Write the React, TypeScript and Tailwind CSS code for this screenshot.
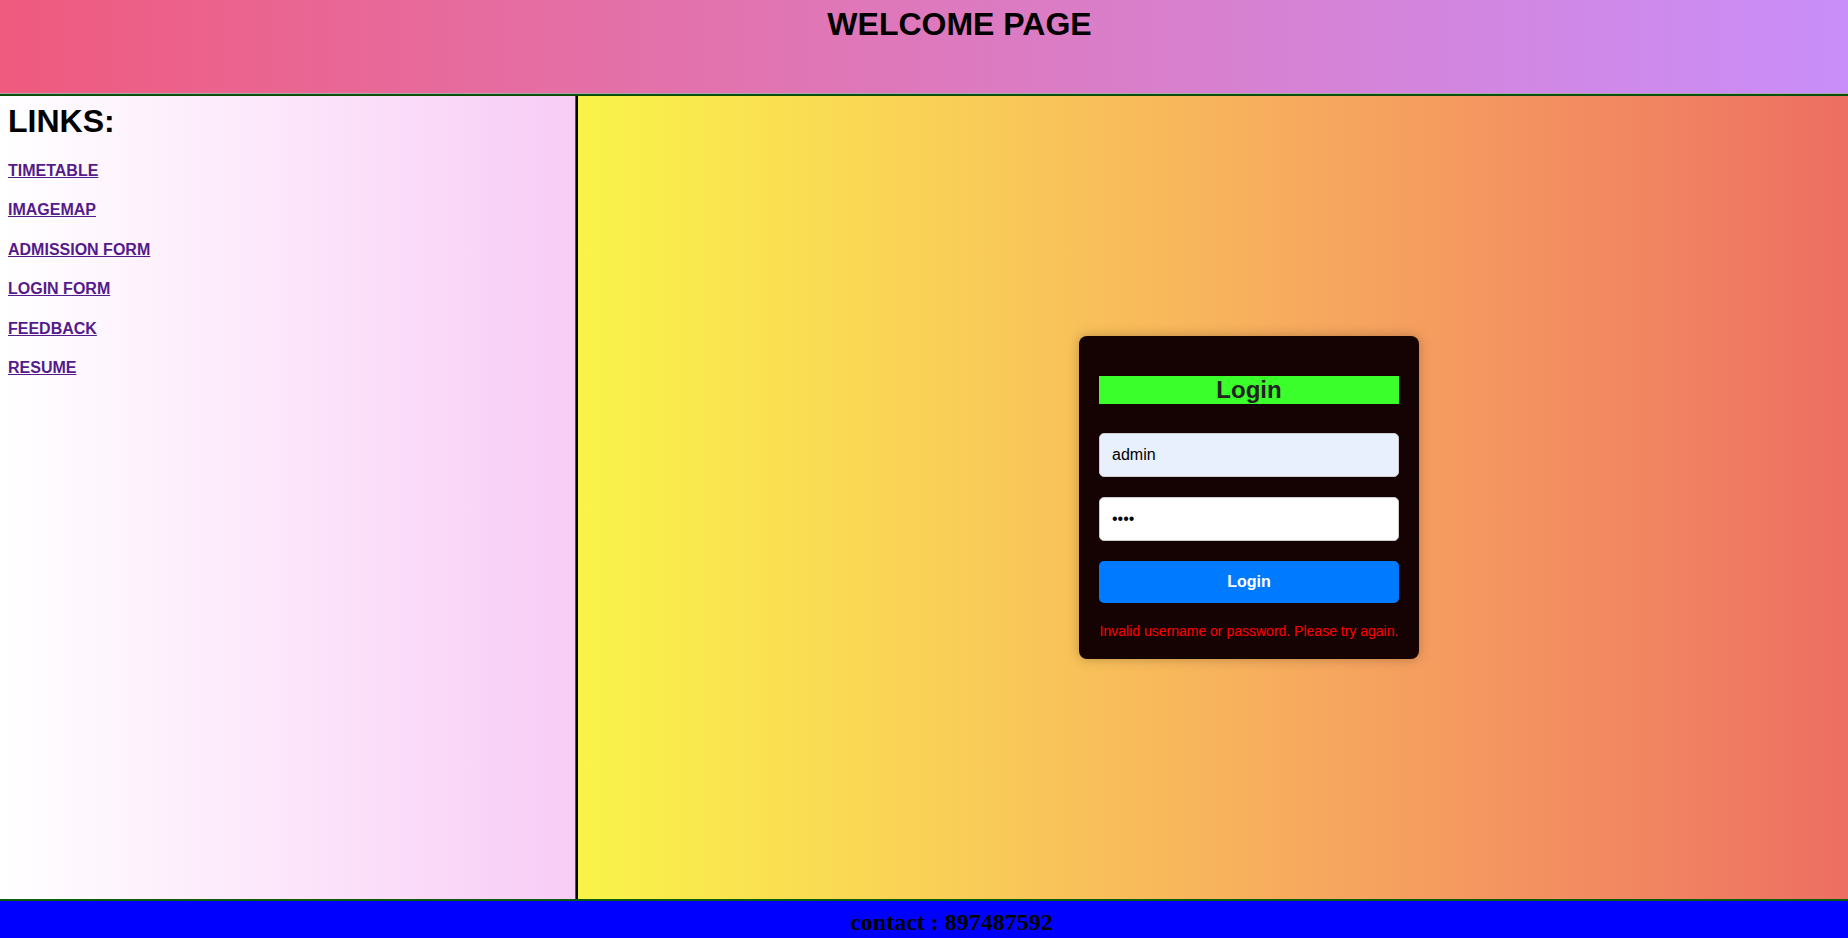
import React from "react";

const links = ["TIMETABLE", "IMAGEMAP", "ADMISSION FORM", "LOGIN FORM", "FEEDBACK", "RESUME"];

function LoginCard() {
  return (
    <div className="w-[340px] rounded-[8px] bg-[#150203] p-[20px] shadow-[0_0_12px_rgba(0,0,0,0.25)]">
      <h2 className="mt-[20px] bg-[#3aff2a] text-center text-[24px] font-bold leading-[28px] text-[#222]">
        Login
      </h2>
      <input
        type="text"
        readOnly
        defaultValue="admin"
        className="mt-[29px] block h-[44px] w-full rounded-[5px] border border-[#cccccc] bg-[#e8f0fe] px-[12px] text-[16px] text-black outline-none"
      />
      <input
        type="password"
        readOnly
        defaultValue="abcd"
        className="mt-[20px] block h-[44px] w-full rounded-[5px] border border-[#cccccc] bg-white px-[12px] text-[16px] text-black outline-none"
      />
      <button className="mt-[20px] block h-[42px] w-full rounded-[5px] bg-[#007bff] text-[16px] font-bold text-white">
        Login
      </button>
      <p className="mt-[20px] text-center text-[14px] leading-[16px] text-[#ff0000]">
        Invalid username or password. Please try again.
      </p>
    </div>
  );
}

export default function App() {
  return (
    <div className="flex h-[938px] w-full flex-col overflow-hidden font-['Liberation_Sans',Arial,sans-serif]">
      {/* top frame */}
      <header className="flex h-[93px] justify-center bg-gradient-to-r from-[#ef5a7e] to-[#c98ef9] pl-[71px] pt-[6px]">
        <h1 className="text-[32px] font-bold leading-[37px] text-black">WELCOME PAGE</h1>
      </header>
      <div className="h-px bg-[#a9a9a9]" />
      <div className="h-[2px] bg-[#0b4f0b]" />

      <main className="flex h-[803px]">
        {/* links frame */}
        <nav className="w-[575px] bg-gradient-to-r from-white to-[#f8ccf6] px-[8px] pt-[7px]">
          <h1 className="text-[32px] font-bold leading-[37px] text-black">LINKS:</h1>
          <div className="mt-[11px] flex flex-col items-start">
            {links.map((l) => (
              <a
                key={l}
                href="#"
                className="text-[16px] font-bold leading-[39.4px] text-[#551a8b] underline"
              >
                {l}
              </a>
            ))}
          </div>
        </nav>
        <div className="w-px bg-[#e01818]" />
        <div className="w-[2px] bg-black" />

        {/* content frame */}
        <section className="flex flex-1 items-center justify-center bg-gradient-to-r from-[#f9f449] to-[#ed6e62] pl-[72px]">
          <LoginCard />
        </section>
      </main>

      <div className="h-[2px] bg-[#0b5f0b]" />
      <footer className="flex flex-1 justify-center bg-[#0000ff] pl-[55px] pt-[7px]">
        <span className="font-['Liberation_Serif',serif] text-[24px] font-bold leading-[28px] text-black">
          contact : 897487592
        </span>
      </footer>
    </div>
  );
}
